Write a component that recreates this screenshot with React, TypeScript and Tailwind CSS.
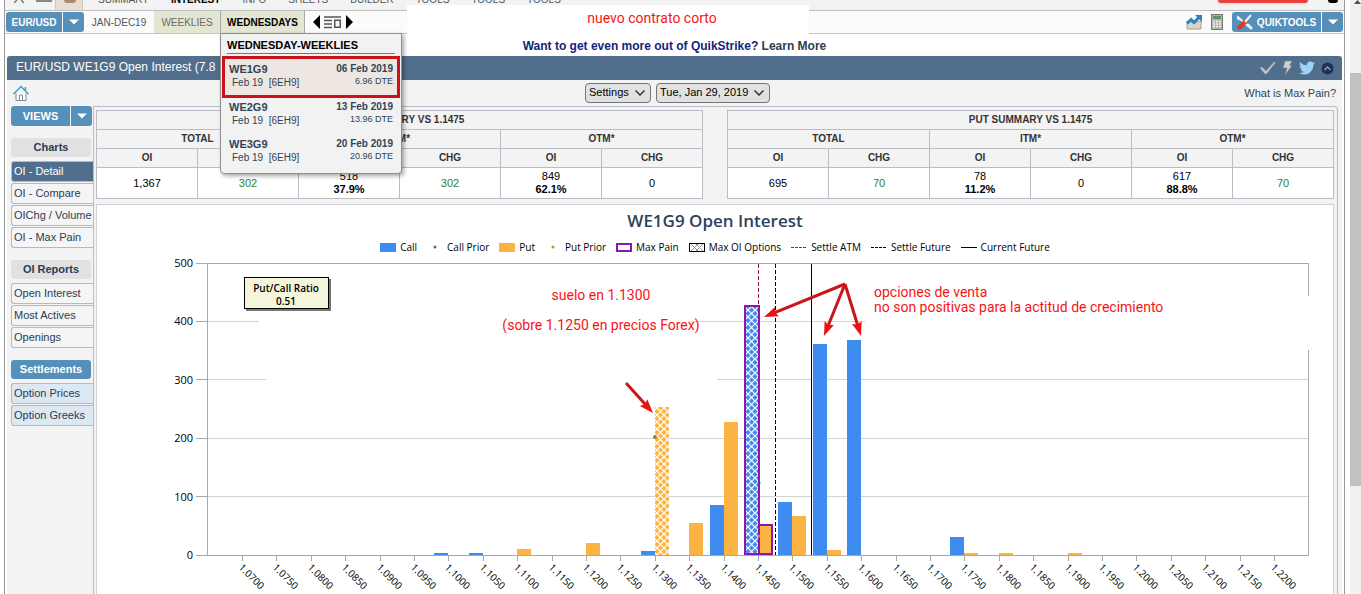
import type { ReactNode } from 'react';
import { FaTwitter } from 'react-icons/fa';

const FONT = "font-['Liberation_Sans',Arial,sans-serif]";

const EXPIRATIONS = [
  { code: 'WE1G9', date: '06 Feb 2019', dte: '6.96 DTE', marked: true },
  { code: 'WE2G9', date: '13 Feb 2019', dte: '13.96 DTE', marked: false },
  { code: 'WE3G9', date: '20 Feb 2019', dte: '20.96 DTE', marked: false },
];

interface Cell { value: string; pct?: string; up?: boolean }

const CALLS: Cell[] = [
  { value: '1,367' }, { value: '302', up: true },
  { value: '518', pct: '37.9%' }, { value: '302', up: true },
  { value: '849', pct: '62.1%' }, { value: '0' },
];

const PUTS: Cell[] = [
  { value: '695' }, { value: '70', up: true },
  { value: '78', pct: '11.2%' }, { value: '0' },
  { value: '617', pct: '88.8%' }, { value: '70', up: true },
];

function Caret() {
  return (
    <svg width="10" height="6" viewBox="0 0 10 6" aria-hidden="true"><path d="M0 0.5h10L5 5.5z" fill="#fff" /></svg>
  );
}

function SplitButton({ children, caretLabel, main }: { children: ReactNode; caretLabel: string; main: string }) {
  return (
    <div className="flex h-5 shrink-0 gap-px">
      <button type="button" className={`flex items-center justify-center rounded-l-[3px] bg-[#5590bb] font-bold text-white ${main}`}>
        {children}
      </button>
      <button type="button" aria-label={caretLabel} className="flex w-[21px] items-center justify-center rounded-r-[3px] bg-[#5590bb]">
        <Caret />
      </button>
    </div>
  );
}

function TopNav() {
  return (
    <nav className="flex h-[11px] items-end overflow-hidden border-b border-[#bfbfbf] bg-[#f3f3f3] text-[10px] leading-3 text-[#555]">
      <div className="flex w-[50px] items-start gap-3 self-start pl-[9px]">
        <svg width="10" height="4" viewBox="0 0 10 4" aria-hidden="true"><path d="M0 3L3 0M7 0l3 3" stroke="#777" strokeWidth="1.5" /></svg>
        <svg width="16" height="4" viewBox="0 0 16 4" aria-hidden="true"><path d="M0 1h16" stroke="#888" strokeWidth="2" /></svg>
      </div>
      <div className="h-[10px] w-[28px] border-x border-[#d0c8c0] bg-[#e8ddd5] px-2">
        <div className="h-[3px] w-3 rounded-b bg-[#b08a6c]" />
      </div>
      <div className="flex gap-[22px] pb-1 pl-[15px]">
        <a href="#summary">SUMMARY</a>
        <a href="#interest" className="font-bold text-black">INTEREST</a>
        <a href="#info">INFO</a>
        <a href="#sheets">SHEETS</a>
        <a href="#builder">BUILDER</a>
        <a href="#tools1">TOOLS</a>
        <a href="#tools2">TOOLS</a>
        <a href="#tools3">TOOLS</a>
      </div>
      <div className="ml-auto flex items-start gap-5 self-start pr-1.5">
        <div className="h-[3px] w-[90px] rounded-b bg-[#e8423b] shadow" />
        <div className="h-[3px] w-2.5 rounded-b-full bg-black" />
      </div>
    </nav>
  );
}

function WednesdayMenu() {
  return (
    <div className="absolute -left-px top-full z-20 w-[182px] rounded-b border border-[#8f8f8f] bg-[#f2f2f2] pb-px text-[#2f4558] shadow-[2px_2px_4px_rgba(0,0,0,0.35)]">
      <div className="mx-1.5 mb-0.5 border-b border-[#777] pb-px pt-1 text-[11px] font-bold leading-[14px] text-black">WEDNESDAY-WEEKLIES</div>
      {EXPIRATIONS.map((e) => (
        <a key={e.code} href={`#${e.code}`}
          className={e.marked
            ? 'mx-px block border-[3px] border-[#c81418] bg-[#eee7e1] px-1 pb-[5px] pt-[3px]'
            : 'mx-px block px-[7px] pb-[7px] pt-0.5'}>
          <span className="flex items-center justify-between text-[10px] font-bold leading-[14px]">
            <span className="text-[11px]">{e.code}</span>
            <span>{e.date}</span>
          </span>
          <span className="flex items-start justify-between pl-[3px] text-[10px] leading-[14px]">
            <span className="whitespace-pre">{'Feb 19  [6EH9]'}</span>
            <span className="text-[9px] leading-[10px]">{e.dte}</span>
          </span>
        </a>
      ))}
    </div>
  );
}

function ContractBar() {
  return (
    <div className="flex h-[23px] items-center border-b border-[#c4c4c4] bg-[#fbfbfb] px-px text-[10px]">
      <SplitButton main="w-[56px]" caretLabel="Choose product">EUR/USD</SplitButton>
      <a href="#quarterly" className="flex h-full w-[70px] items-center justify-center text-[#555]">JAN-DEC19</a>
      <a href="#weeklies" className="flex h-full w-[67px] items-center justify-center border-r border-[#aaa] bg-[#e3e6d2] text-[#6b6b62]">WEEKLIES</a>
      <div className="relative flex h-full w-[84px] items-center justify-center border-r border-[#aaa] bg-[#e3e6d2]">
        <a href="#wednesdays" className="font-bold text-black">WEDNESDAYS</a>
        <WednesdayMenu />
      </div>
      <svg className="ml-2" width="40" height="14" viewBox="0 0 40 14" aria-hidden="true">
        <path d="M7 0v14L0 7zM33 0v14l7-7z" fill="#000" />
        <path d="M11 2h17M11 5.500h8M11 9h8M11 12.500h8" stroke="#555" strokeWidth="1.500" />
        <rect x="21.750" y="5.250" width="5.500" height="7" fill="none" stroke="#555" strokeWidth="1.500" />
      </svg>
      <div className="ml-auto flex items-center gap-2">
        <svg width="17" height="16" viewBox="0 0 17 16" aria-hidden="true">
          <path d="M1 7v8h14V7l-4 1-3 2-3-2z" fill="#ddd6c6" stroke="#aaa08c" />
          <path d="M1 9.500l4-4 3 3 5-5" fill="none" stroke="#2c82c0" strokeWidth="3" />
          <path d="M9 1h7v7z" fill="#2c82c0" />
        </svg>
        <svg width="13" height="16" viewBox="0 0 13 16" aria-hidden="true">
          <rect x="0.500" y="0.500" width="11" height="15" fill="#b2b3a9" stroke="#77786f" />
          <rect x="2" y="2" width="8" height="3" fill="#5f9069" />
          <path d="M2 7.500h8M2 10h8M2 12.500h8" stroke="#f4f4f4" strokeWidth="1.500" strokeDasharray="2 1" />
        </svg>
        <SplitButton main="w-[89px] gap-1" caretLabel="More tools">
          <svg width="16" height="16" viewBox="0 0 16 16" aria-hidden="true">
            <path d="M2 4l9 8" stroke="#eee" strokeWidth="2" />
            <path d="M4 5A2.500 2.500 0 11.500 1.500L2.500 3z" fill="#eee" />
            <path d="M11 11l3 3" stroke="#eee" strokeWidth="3" strokeLinecap="round" />
            <path d="M2.500 13.500l5-5" stroke="#d5392f" strokeWidth="4.500" strokeLinecap="round" />
            <path d="M8 8l6-7" stroke="#f2f2f2" strokeWidth="2" />
          </svg>
          QUIKTOOLS
        </SplitButton>
      </div>
    </div>
  );
}

function TitleBar() {
  return (
    <div className="flex h-6 items-center justify-between rounded-t-[3px] bg-[#516f8c] pl-[9px] pr-2 text-[12px] text-white">
      <h1 className="pb-0.5">EUR/USD WE1G9 Open Interest (7.8</h1>
      <div className="flex items-center gap-1.5">
        <svg width="17" height="14" viewBox="0 0 17 14" aria-hidden="true"><path d="M1 7l2-1 4 4 8-9 1.500.500L7.500 13H6z" fill="#c4c4c4" stroke="#8f979d" strokeWidth="0.500" /></svg>
        <svg width="11" height="16" viewBox="0 0 11 16" aria-hidden="true"><path d="M3 1h7L7.500 5.500H10L3 15l2-7H1z" fill="#cfcfcf" stroke="#7c7c7c" strokeWidth="0.500" /></svg>
        <FaTwitter size={16} color="#9fd3f5" />
        <svg width="13" height="13" viewBox="0 0 13 13" aria-hidden="true">
          <circle cx="6.500" cy="6.500" r="6" fill="#20305a" />
          <path d="M3.500 8l3-3 3 3" fill="none" stroke="#8fa0bb" strokeWidth="1.300" />
        </svg>
      </div>
    </div>
  );
}

function Picker({ label, value, width }: { label: string; value: string; width: string }) {
  return (
    <div className={`relative ${width}`}>
      <select aria-label={label} defaultValue={value}
        className="block h-5 w-full appearance-none rounded-sm border border-[#767676] bg-[#e1e1e1] pb-0.5 pl-[3px] text-[11px] text-black">
        <option>{value}</option>
      </select>
      <svg className="pointer-events-none absolute right-1.5 top-[7px]" width="10" height="6" viewBox="0 0 10 6" aria-hidden="true">
        <path d="M0.500 0.500L5 5l4.500-4.500" fill="none" stroke="#333" strokeWidth="1.500" />
      </svg>
    </div>
  );
}

function Toolbar() {
  return (
    <div className="grid h-[26px] grid-cols-[1fr_auto_1fr] items-center pl-1.5">
      <a href="#home" aria-label="Home">
        <svg width="16" height="16" viewBox="0 0 16 16" aria-hidden="true">
          <path d="M3 8v7.500h10V8" fill="#fff" stroke="#7d8b91" />
          <path d="M6.500 15v-5h3v5" fill="none" stroke="#7d8b91" />
          <path d="M0.500 9L8 1.500 15.500 9M12.500 5V2" fill="none" stroke="#3ba0d0" strokeWidth="1.500" />
        </svg>
      </a>
      <div className="flex gap-[5px]">
        <Picker label="Settings" value="Settings" width="w-[66px]" />
        <Picker label="Trade date" value="Tue, Jan 29, 2019" width="w-[114px]" />
      </div>
      <a href="#max-pain" className="pr-1.5 text-right text-[11px] leading-[18px] text-[#2f4558]">What is Max Pain?</a>
    </div>
  );
}

const ITEM = 'block h-[21px] whitespace-nowrap rounded-l-[3px] border border-r-0 border-[#b4bac4] pl-0.5 text-[11px] leading-[19px]';

function MenuGroup({ title, items, active, blue }: { title: string; items: string[]; active?: string; blue?: boolean }) {
  return (
    <section className="mt-3">
      <h2 className={`mb-1 mr-0.5 h-[19px] rounded-[3px] text-center text-[11px] font-bold leading-[19px] ${blue ? 'bg-[#5590bb] text-white' : 'bg-[#e1e1e1] text-[#2d3b55]'}`}>
        {title}
      </h2>
      <ul className="flex flex-col gap-px">
        {items.map((item) => (
          <li key={item}>
            <a href="#view" className={`${ITEM} ${item === active ? 'bg-[#516f8c] text-white' : blue ? 'bg-[#dce9f2] text-[#2d3b55]' : 'bg-[#f5f5f5] text-[#2d3b55]'}`}>
              {item}
            </a>
          </li>
        ))}
      </ul>
    </section>
  );
}

function Sidebar() {
  return (
    <aside className="w-[86px] shrink-0 pl-1 text-[11px]">
      <SplitButton main="w-[59px]" caretLabel="More views">VIEWS</SplitButton>
      <MenuGroup title="Charts" items={['OI - Detail', 'OI - Compare', 'OIChg / Volume', 'OI - Max Pain']} active="OI - Detail" />
      <MenuGroup title="OI Reports" items={['Open Interest', 'Most Actives', 'Openings']} />
      <MenuGroup title="Settlements" items={['Option Prices', 'Option Greeks']} blue />
    </aside>
  );
}

function SummaryTable({ title, cells }: { title: string; cells: Cell[] }) {
  const th = 'h-[19px] border border-[#b9bdc6] p-0 text-center font-bold';
  return (
    <table className="w-full table-fixed border-collapse text-[10px] leading-3 text-[#333]">
      <thead>
        <tr><th colSpan={6} className={th}>{title}</th></tr>
        <tr>{['TOTAL', 'ITM*', 'OTM*'].map((t) => <th key={t} colSpan={2} className={th}>{t}</th>)}</tr>
        <tr>{cells.map((_, i) => <th key={i} className={th}>{i % 2 ? 'CHG' : 'OI'}</th>)}</tr>
      </thead>
      <tbody>
        <tr className="bg-white text-[11px] leading-[13px] text-black">
          {cells.map((c, i) => (
            <td key={i} className={`h-[31px] border border-[#b9bdc6] p-0 text-center ${c.up ? 'text-[#2e7d32]' : ''}`}>
              {c.value}
              {c.pct && <b className="block">{c.pct}</b>}
            </td>
          ))}
        </tr>
      </tbody>
    </table>
  );
}

const BLUE = '#3f8cf0';
const ORANGE = '#fbb343';
const PURPLE = '#8a17ae';

// open interest by strike index, 0 = 1.0700, one step = 0.0050
const BARS: { i: number; call?: number; put?: number }[] = [
  { i: 6, call: 3 },
  { i: 7, call: 3 },
  { i: 8, put: 11 },
  { i: 10, put: 21 },
  { i: 12, call: 6, put: 254 },
  { i: 13, put: 55 },
  { i: 14, call: 86, put: 227 },
  { i: 15, call: 426, put: 52 },
  { i: 16, call: 91, put: 67 },
  { i: 17, call: 362, put: 9 },
  { i: 18, call: 369 },
  { i: 21, call: 30, put: 3 },
  { i: 22, put: 3 },
  { i: 24, put: 3 },
];

const tickX = (i: number) => Math.round(145 + i * 34.4);
const valueY = (v: number) => Math.round(301 - v * 0.584);

function Legend() {
  const items: [string, ReactNode][] = [
    ['Call', <rect key="s" y="1" width="16" height="9" fill={BLUE} />],
    ['Call Prior', <circle key="s" cx="8" cy="5" r="1.5" fill="#3d6d99" />],
    ['Put', <rect key="s" y="1" width="16" height="9" fill={ORANGE} />],
    ['Put Prior', <circle key="s" cx="8" cy="5" r="1.5" fill="#b89a2c" />],
    ['Max Pain', <rect key="s" x="1" y="2" width="14" height="7" fill="#fff" stroke={PURPLE} strokeWidth="2" />],
    ['Max OI Options', (
      <g key="s" fill="none" stroke="#999">
        <path d="M1 1l9 9M6 1l9 9M10 1L1 10M15 1l-9 9" />
        <rect x="0.500" y="1.500" width="15" height="8" stroke="#000" />
      </g>
    )],
    ['Settle ATM', <path key="s" d="M0 5.500h16" stroke="#a02020" strokeDasharray="3 1" />],
    ['Settle Future', <path key="s" d="M0 5.500h16" stroke="#000" strokeDasharray="3 1" />],
    ['Current Future', <path key="s" d="M0 5.500h16" stroke="#000" />],
  ];
  return (
    <ul className="flex justify-center gap-2.5 font-['Open_Sans',sans-serif] text-[10px] leading-[14px] text-black">
      {items.map(([label, mark]) => (
        <li key={label} className="flex items-center gap-1 whitespace-nowrap">
          <svg width="16" height="11" viewBox="0 0 16 11" aria-hidden="true">{mark}</svg>
          {label}
        </li>
      ))}
    </ul>
  );
}

function Arrow({ x1, y1, x2, y2 }: { x1: number; y1: number; x2: number; y2: number }) {
  const angle = (Math.atan2(y2 - y1, x2 - x1) * 180) / Math.PI;
  const len = Math.hypot(x2 - x1, y2 - y1);
  return (
    <g transform={`translate(${x1} ${y1}) rotate(${angle})`}>
      <path d={`M0 0H${len - 11}`} stroke="#cc1518" strokeWidth="3" />
      <path d={`M${len} 0l-14 -5l2 5l-2 5z`} fill="#ee1010" />
    </g>
  );
}

function OpenInterestChart() {
  return (
    <svg viewBox="0 0 1236 340" className="block h-auto w-full" role="img" aria-label="WE1G9 Open Interest by strike">
      <defs>
        <pattern id="lattice" width="7" height="7" patternUnits="userSpaceOnUse">
          <path d="M-1 -1L8 8M8 -1L-1 8" stroke="#fff" strokeWidth="1.200" />
        </pattern>
      </defs>

      <path d="M110 67.500h52M594 67.500h174M110 125.500h59M620 125.500h591M110 184.500h1101M110 242.500h1101" stroke="#d4d4d4" />
      <path d="M110.500 301V9.500H1211.500V42M1211.500 96V301" fill="none" stroke="#a8a8a8" />
      <path d="M99 301.500H1212M99 9.500h11M99 67.500h11M99 125.500h11M99 184.500h11M99 242.500h11" stroke="#a8a8a8" />

      <g className="font-['Open_Sans',sans-serif]" fontSize="11" textAnchor="end">
        {[500, 400, 300, 200, 100, 0].map((v) => <text key={v} x="96" y={valueY(v) + 4}>{v}</text>)}
      </g>
      <g className="font-['Open_Sans',sans-serif]" fontSize="10">
        {Array.from({ length: 31 }, (_, i) => (
          <g key={i}>
            <path d={`M${tickX(i) + 0.5} 301v6`} stroke="#a8a8a8" />
            <text transform={`translate(${tickX(i) - 4} 314) rotate(45)`}>{(1.07 + i * 0.005).toFixed(4)}</text>
          </g>
        ))}
      </g>

      {BARS.map(({ i, call, put }) => (
        <g key={i}>
          {call && <rect x={tickX(i) - 14} y={valueY(call)} width="14" height={301 - valueY(call)} fill={BLUE} />}
          {put && <rect x={tickX(i)} y={valueY(put)} width="14" height={301 - valueY(put)} fill={ORANGE} />}
        </g>
      ))}
      <rect x={tickX(12)} y={valueY(254)} width="14" height={301 - valueY(254)} fill="url(#lattice)" />
      <rect x={tickX(15) - 14} y={valueY(426)} width="14" height={301 - valueY(426)} fill="url(#lattice)" />
      <g fill="none" stroke={PURPLE} strokeWidth="2">
        <rect x={tickX(15) - 13} y={valueY(426)} width="14" height={300 - valueY(426)} />
        <rect x={tickX(15) + 1} y={valueY(52)} width="13" height={300 - valueY(52)} />
      </g>
      <circle cx="558" cy="183" r="2" fill="#a07c28" />
      <circle cx="662" cy="229" r="1.500" fill="#3d4d88" />
      <circle cx="662" cy="282" r="1.500" fill="#f07c28" />

      <path d="M661.500 10V52" stroke="#8e1f30" strokeDasharray="4 2" />
      <path d="M678.500 10V301" stroke="#000" strokeDasharray="4 2" />
      <path d="M714.500 10V301" stroke="#000" />

      <rect x="149" y="25" width="85" height="32" fill="#777" />
      <rect x="147.500" y="23.500" width="84" height="31" fill="#f5f5dc" stroke="#000" />
      <g className="font-['Open_Sans',sans-serif]" fontSize="10" fontWeight="600" textAnchor="middle">
        <text x="189" y="38">Put/Call Ratio</text>
        <text x="189" y="51">0.51</text>
      </g>

      <Arrow x1={748} y1={30} x2={667} y2={63} />
      <Arrow x1={748} y1={30} x2={727} y2={82} />
      <Arrow x1={748} y1={30} x2={764} y2={82} />
      <Arrow x1={529} y1={129} x2={556} y2={159} />
      <g className="font-[Roboto,sans-serif]" fontSize="14" fill="#f81414">
        <text x="504" y="46" textAnchor="middle">suelo en 1.1300</text>
        <text x="504" y="76" textAnchor="middle">(sobre 1.1250 en precios Forex)</text>
        <text x="777" y="43">opciones de venta</text>
        <text x="777" y="58">no son positivas para la actitud de crecimiento</text>
      </g>
    </svg>
  );
}

function ChartPanel() {
  return (
    <div className="mt-[5px] border border-b-0 border-[#cfd1d6] bg-white">
      <h2 className="pb-2 pt-[5px] text-center font-['Open_Sans',sans-serif] text-[17px] font-semibold leading-[22px] text-[#2f3f5c]">WE1G9 Open Interest</h2>
      <Legend />
      <OpenInterestChart />
    </div>
  );
}

export default function App() {
  return (
    <div className={`flex h-screen overflow-hidden bg-white pl-1 ${FONT}`}>
      <div className="relative min-w-0 flex-1 border-x border-[#999]">
        <TopNav />
        <ContractBar />
        <p className="h-[22px] text-center text-[12px] font-bold leading-6 text-[#12257a]">
          Want to get even more out of QuikStrike? <a href="#learn" className="text-[#2b4150]">Learn More</a>
        </p>
        <div className="mx-0.5 bg-[#f3f3f3]">
          <TitleBar />
          <Toolbar />
          <div className="flex pr-1">
            <Sidebar />
            <main className="min-w-0 flex-1 rounded-tr border border-b-0 border-[#b9bdc6] pl-0.5 pr-[3px] pt-[3px]">
              <div className="grid grid-cols-2 gap-6">
                <SummaryTable title="CALL SUMMARY VS 1.1475" cells={CALLS} />
                <SummaryTable title="PUT SUMMARY VS 1.1475" cells={PUTS} />
              </div>
              <ChartPanel />
            </main>
          </div>
        </div>
        <p className="absolute left-[402px] top-[5px] z-10 h-[31px] w-[402px] bg-white pl-[88px] text-center font-[Roboto,sans-serif] text-[14px] leading-[26px] text-[#f81414]">nuevo contrato corto</p>
      </div>
      <div className="ml-[5px] w-[11px] shrink-0 bg-[#f1f1f1]">
        <svg className="ml-1" width="7" height="5" viewBox="0 0 7 5" aria-hidden="true"><path d="M0 4l3.500-4L7 4z" fill="#505050" /></svg>
        <div className="mt-[68px] h-[413px] bg-[#c1c1c1]" />
      </div>
    </div>
  );
}
